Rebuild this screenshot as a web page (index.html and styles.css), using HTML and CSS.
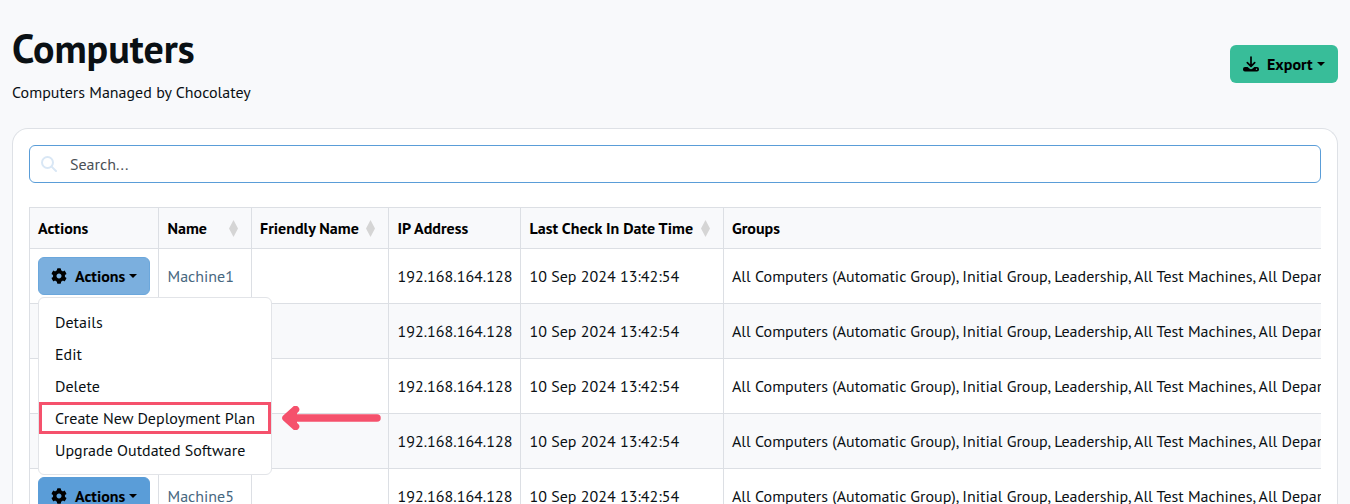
FILE: index.html
```
<!DOCTYPE html>
<html lang="en">
<head>
<meta charset="utf-8">
<title>Computers</title>
<link rel="stylesheet" href="styles.css">
</head>
<body>
<svg class="defs" width="0" height="0">
  <symbol id="gear" viewBox="0 0 512 512"><path fill-rule="evenodd" d="M487.4 315.7l-42.6-24.6c4.300-23.200 4.300-47 0-70.200l42.600-24.600c4.900-2.800 7.100-8.600 5.500-14-11.100-35.600-30-67.800-54.700-94.600-3.800-4.100-10-5.100-14.800-2.300L380.800 110c-17.900-15.400-38.500-27.300-60.800-35.100V25.800c0-5.600-3.900-10.500-9.400-11.700-36.700-8.200-74.300-7.800-109.200 0-5.500 1.200-9.400 6.100-9.400 11.700V75c-22.200 7.900-42.800 19.800-60.800 35.100L88.700 85.500c-4.900-2.800-11-1.900-14.800 2.300-24.700 26.700-43.600 58.900-54.700 94.600-1.700 5.400.6 11.200 5.500 14L67.300 221c-4.300 23.200-4.300 47 0 70.200l-42.600 24.600c-4.900 2.800-7.100 8.600-5.500 14 11.100 35.600 30 67.800 54.700 94.600 3.800 4.100 10 5.100 14.800 2.300l42.600-24.600c17.900 15.400 38.500 27.300 60.800 35.100v49.200c0 5.600 3.900 10.500 9.400 11.700 36.700 8.200 74.300 7.800 109.200 0 5.500-1.200 9.400-6.100 9.400-11.700v-49.200c22.200-7.900 42.800-19.800 60.800-35.100l42.600 24.600c4.900 2.800 11 1.900 14.800-2.300 24.700-26.700 43.600-58.900 54.700-94.600 1.500-5.500-.7-11.300-5.600-14.100zM256 336c-44.100 0-80-35.900-80-80s35.900-80 80-80 80 35.900 80 80-35.900 80-80 80z"/></symbol>
  <symbol id="sort" viewBox="0 0 9 17"><path d="M4.500 0L9 8.500 4.500 17 0 8.500z"/></symbol>
</svg>
<header class="page-head">
  <div>
    <h1 class="title">Computers</h1>
    <p class="subtitle">Computers Managed by Chocolatey</p>
  </div>
  <button class="btn btn-export">
    <svg class="icon" viewBox="0 0 16 16"><path d="M8 1v9M4.300 6.600L8 10.300l3.700-3.700" fill="none" stroke="#000" stroke-width="1.700" stroke-linecap="round" stroke-linejoin="round"/><path fill-rule="evenodd" d="M2 11h2.600l1.800 1.400a2.300 2.300 0 0 0 3.200 0L11.400 11H14a2 2 0 0 1 2 2v.6a2 2 0 0 1-2 2H2a2 2 0 0 1-2-2V13a2 2 0 0 1 2-2zM13.500 12.500a.7.7 0 1 0 0 1.400.7.7 0 0 0 0-1.400z"/></svg>
    <span>Export</span><i class="caret"></i>
  </button>
</header>
<main class="card">
  <div class="search">
    <svg class="search-icon" viewBox="0 0 16 16"><circle cx="6.500" cy="6.500" r="5.500"/><path d="M10.600 10.600L15 15"/></svg>
    <span>Search...</span>
  </div>
  <div class="table">
    <div class="row head">
      <div>Actions</div>
      <div class="name">Name<svg class="sort"><use href="#sort"/></svg></div>
      <div>Friendly Name<svg class="sort"><use href="#sort"/></svg></div>
      <div>IP Address</div>
      <div>Last Check In Date Time<svg class="sort"><use href="#sort"/></svg></div>
      <div>Groups</div>
    </div>
    <div class="row">
      <div class="dropdown">
        <button class="btn btn-actions open"><svg class="icon"><use href="#gear"/></svg><span>Actions</span><i class="caret"></i></button>
        <div class="menu">
          <a>Details</a>
          <a>Edit</a>
          <a>Delete</a>
          <a class="marked">Create New Deployment Plan</a>
          <a>Upgrade Outdated Software</a>
          <svg class="arrow" viewBox="0 0 100 24"><path d="M96 12H6M14.500 3.500L5 12l9.500 8.500"/><path class="tip" d="M4 12L14 4v16z"/></svg>
        </div>
      </div>
      <div class="name link">Machine1</div><div></div><div>192.168.164.128</div><div>10 Sep 2024 13:42:54</div><div class="groups">All Computers (Automatic Group), Initial Group, Leadership, All Test Machines, All Departments</div>
    </div>
    <div class="row alt"><div></div><div></div><div></div><div>192.168.164.128</div><div>10 Sep 2024 13:42:54</div><div class="groups">All Computers (Automatic Group), Initial Group, Leadership, All Test Machines, All Departments</div></div>
    <div class="row"><div></div><div></div><div></div><div>192.168.164.128</div><div>10 Sep 2024 13:42:54</div><div class="groups">All Computers (Automatic Group), Initial Group, Leadership, All Test Machines, All Departments</div></div>
    <div class="row alt"><div></div><div></div><div></div><div>192.168.164.128</div><div>10 Sep 2024 13:42:54</div><div class="groups">All Computers (Automatic Group), Initial Group, Leadership, All Test Machines, All Departments</div></div>
    <div class="row">
      <div><button class="btn btn-actions"><svg class="icon"><use href="#gear"/></svg><span>Actions</span><i class="caret"></i></button></div>
      <div class="name link">Machine5</div><div></div><div>192.168.164.128</div><div>10 Sep 2024 13:42:54</div><div class="groups">All Computers (Automatic Group), Initial Group, Leadership, All Test Machines, All Departments</div>
    </div>
  </div>
</main>
</body>
</html>
```
FILE: styles.css
```
* { box-sizing: border-box; }
body {
  height: 504px;
  margin: 0;
  padding: 0 12px;
  overflow: hidden;
  background: #f8f9fb;
  color: #0a1014;
  font: 16px/24px "PT Sans", "Noto Sans", sans-serif;
}
.defs { position: absolute; }
.page-head {
  display: flex;
  justify-content: space-between;
  align-items: center;
  height: 128px;
}
.title {
  margin: 24px 0 8px;
  font-size: 40px;
  line-height: 48px;
  font-weight: 700;
}
.subtitle { margin: 0 0 24px; }

.btn {
  display: flex;
  align-items: center;
  height: 38px;
  padding: 0 12px;
  border: 1px solid transparent;
  border-radius: 6px;
  color: #000;
  font: inherit;
  font-weight: 700;
}
.icon { width: 16px; height: 16px; margin-right: 8px; flex: none; }
.caret {
  margin-left: 4px;
  border: 4px solid transparent;
  border-top-color: #000;
  border-bottom: 0;
}
.btn-export { width: 108px; background: #38bd99; }
.btn-actions { width: 112px; background: #5a9dd8; border-color: #5a9dd8; }
.btn-actions.open { background: #7bafde; border-color: #6ba7dc; }

.card {
  height: 376px;
  overflow: hidden;
  padding: 16px 16px 0;
  border: 1px solid #dee1e6;
  border-bottom: 0;
  border-radius: 16px 16px 0 0;
  background: #fff;
}
.search {
  display: flex;
  align-items: center;
  height: 38px;
  padding-left: 11px;
  border: 1px solid #5a9dd8;
  border-radius: 6px;
  color: #4a5056;
}
.search-icon {
  width: 16px;
  height: 16px;
  margin-right: 13px;
  fill: none;
  stroke: #d9e7f5;
  stroke-width: 2;
  stroke-linecap: round;
}

.table {
  margin-top: 24px;
  border-left: 1px solid #dcdfe4;
}
.row {
  display: grid;
  grid-template-columns: 129px 93px 137px 132px 203px minmax(0, 1fr);
  height: 55px;
  border-top: 1px solid #dcdfe4;
}
.row > div {
  display: flex;
  align-items: center;
  padding: 0 8px;
  white-space: nowrap;
  border-right: 1px solid #dcdfe4;
}
.row > div:last-child { border-right: 0; }
.row > .name { padding-left: 8.5px; }
.row > div:nth-child(4) { padding-left: 8.5px; }
.row > div:nth-child(5) { padding-left: 8.5px; }
.alt, .head { background: #f8f9fb; }
.head {
  height: 41px;
  color: #000;
  font-weight: 700;
}
.sort { width: 9px; height: 17px; margin-left: auto; margin-right: 5px; fill: #d5d5d5; }
.link { color: #47677f; }
.row > .groups { overflow: hidden; padding-right: 0; }

.dropdown { position: relative; }
.menu {
  position: absolute;
  z-index: 2;
  top: 48px;
  left: 8px;
  width: 234px;
  padding: 8px 0;
  border: 1px solid #e2e4e8;
  border-radius: 6px;
  background: #fff;
}
.menu a { display: block; height: 32px; padding: 4px 16px; }
.menu a.marked {
  padding: 1px 13px;
  border: 3px solid #f5516c;
}
.arrow {
  position: absolute;
  left: 242px;
  top: 108px;
  width: 100px;
  height: 24px;
  fill: none;
  stroke: #f5516c;
  stroke-width: 7.5;
  stroke-linecap: round;
  stroke-linejoin: round;
}
.arrow .tip { fill: #f5516c; stroke-width: 4; }
```
